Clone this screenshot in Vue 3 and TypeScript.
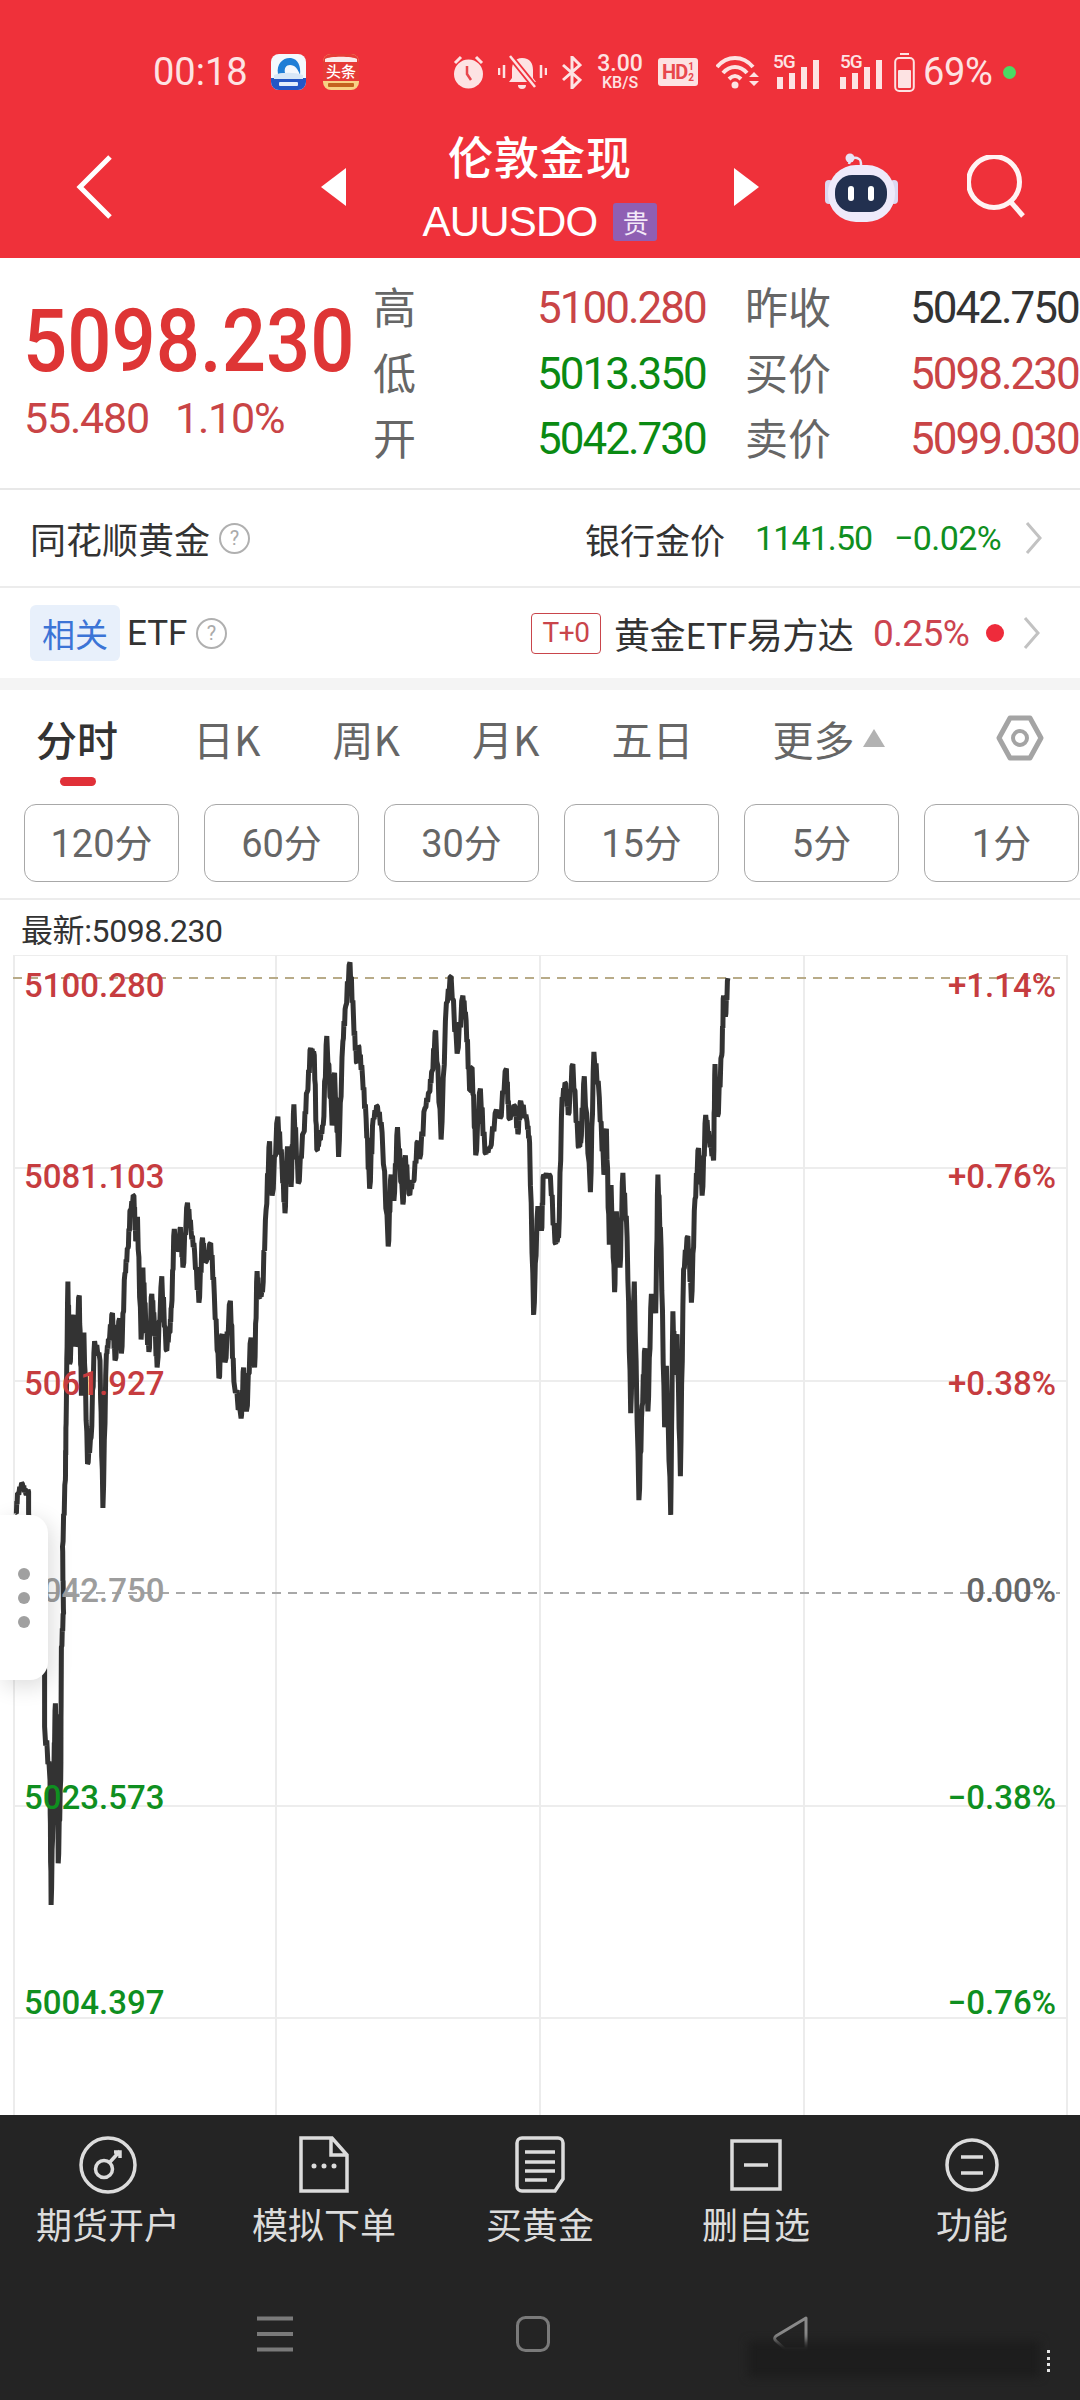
<template>
  <div class="page">
    <header class="top">
      <div class="status">
        <span class="time">00:18</span>
        <svg class="app-blue" width="35" height="36" viewBox="0 0 35 36">
          <rect width="35" height="36" rx="8" fill="#f4f8fd" />
          <path d="M0 24h35v4a8 8 0 0 1-8 8H8a8 8 0 0 1-8-8z" fill="#2456c4" />
          <path d="M7 20C5 9 13 3 20 4c7 1 10 8 9 17-2-6-5-10-10-10-4 0-6 3-5 8z" fill="#1f7ed6" />
          <path d="M3 21c8-3 20-3 29 0v4H3z" fill="#d8e7f7" />
          <rect x="8" y="28" width="19" height="4" rx="1" fill="#e4edfb" />
        </svg>
        <svg class="app-red" width="36" height="36" viewBox="0 0 36 36">
          <rect width="36" height="36" rx="8" fill="#f8d184" />
          <path d="M0 8a8 8 0 0 1 8-8h20a8 8 0 0 1 8 8v19H0z" fill="#e63b36" />
          <path d="M2 5c4-3 28-3 32 0v3H2z" fill="#fbeaea" />
          <text x="18" y="23" text-anchor="middle" font-size="15" font-weight="500" fill="#fff" class="cjk">头条</text>
          <rect x="5" y="29" width="26" height="4" rx="1" fill="#c4621f" />
        </svg>
        <svg class="alarm" width="31" height="34" viewBox="0 0 31 34">
          <circle cx="15.5" cy="19" r="14.5" fill="#fde3e3" />
          <path d="M2 8l6-6M29 8l-6-6" stroke="#fde3e3" stroke-width="3" />
          <path d="M14 11v8l4 6" stroke="#e8474d" stroke-width="2.5" fill="none" />
        </svg>
        <svg class="bell" width="49" height="34" viewBox="0 0 49 34">
          <path d="M24 3c-7 0-10 5-10 12v8l-3 4h27l-3-4v-8c0-7-3-12-11-12z" fill="#fde3e3" />
          <path d="M20 30a4 4 0 0 0 8 0z" fill="#fde3e3" />
          <path d="M12 1l25 31" stroke="#f0323c" stroke-width="6" />
          <path d="M12 1l25 31" stroke="#fde3e3" stroke-width="2.5" />
          <path d="M1 13v7M6 10v13M43 10v13M48 13v7" stroke="#fde3e3" stroke-width="2.5" />
        </svg>
        <svg class="bt" width="20" height="33" viewBox="0 0 20 33">
          <path d="M1 9l17 15-8 8V1l8 8L1 24" stroke="#fde3e3" stroke-width="3" fill="none" />
        </svg>
        <div class="speed"><span>3.00</span><small>KB/S</small></div>
        <div class="hd"><b>HD</b><i>1<br />2</i></div>
        <svg class="wifi" width="44" height="34" viewBox="0 0 44 34">
          <path d="M1 12c10-12 26-12 36 0M7 18c7-8 17-8 24 0M13 24c4-4 8-4 12 0" stroke="#fde3e3" stroke-width="4" fill="none" />
          <circle cx="19" cy="30" r="3.5" fill="#fde3e3" />
          <path d="M33 22h10l-5-5zM33 26h10l-5 5z" fill="#fde3e3" />
        </svg>
        <div v-for="n in 2" :key="n" class="sig" :class="'sig' + n">
          <span class="g5">5G</span>
          <i v-for="h in signalBars" :key="h" :style="{ height: h + 'px' }"></i>
        </div>
        <svg class="batt" width="21" height="39" viewBox="0 0 21 39">
          <path d="M6 1h9" stroke="#fde3e3" stroke-width="2" />
          <rect x="1.2" y="5" width="18.6" height="33" rx="4" stroke="#fde3e3" stroke-width="2" fill="none" />
          <rect x="4" y="17" width="13" height="18" rx="1" fill="#fde3e3" />
        </svg>
        <span class="pct">69%</span>
        <span class="dot"></span>
      </div>

      <nav class="nav">
        <svg class="back" width="37" height="64" viewBox="0 0 37 64">
          <path d="M34 2L4 32l30 30" stroke="#fff" stroke-width="5" fill="none" />
        </svg>
        <span class="tri-l"></span>
        <div class="title">
          <h1>伦敦金现</h1>
          <div class="sub">AUUSDO<span class="gui">贵</span></div>
        </div>
        <span class="tri-r"></span>
        <svg class="robot" width="73" height="71" viewBox="0 0 73 71">
          <path d="M24 13c1-5 5-8 10-5 2 1 2 4 2 6" stroke="#e8e4f5" stroke-width="2.5" fill="none" />
          <circle cx="25" cy="7" r="4.5" fill="#e8e4f5" />
          <rect x="0" y="29" width="8" height="24" rx="4" fill="#dcd8f0" />
          <rect x="65" y="29" width="8" height="24" rx="4" fill="#dcd8f0" />
          <rect x="3" y="14" width="67" height="57" rx="28" fill="#eeeafa" />
          <rect x="10" y="24" width="52" height="37" rx="17" fill="#22304f" />
          <rect x="23" y="35" width="6" height="15" rx="3" fill="#fff" />
          <rect x="43" y="35" width="6" height="15" rx="3" fill="#fff" />
        </svg>
        <svg class="search" width="60" height="64" viewBox="0 0 60 64">
          <circle cx="27" cy="27" r="25.5" stroke="#fff3f3" stroke-width="5" fill="none" />
          <path d="M43 46l13 15" stroke="#fff3f3" stroke-width="5" />
        </svg>
      </nav>
    </header>

    <section class="quote">
      <div class="q-left">
        <div class="q-price">5098.230</div>
        <div class="q-change"><span>55.480</span><span>1.10%</span></div>
      </div>
      <div class="q-grid">
        <template v-for="cell in quoteCells" :key="cell.text">
          <span :class="cell.cls">{{ cell.text }}</span>
        </template>
      </div>
    </section>

    <div class="row row-a">
      <span class="row-name">同花顺黄金</span>
      <span class="help">?</span>
      <span class="row-right">银行金价</span>
      <span class="bank-val green">1141.50</span>
      <span class="bank-pct green">−0.02%</span>
      <svg class="chev" width="17" height="32" viewBox="0 0 17 32"><path d="M2 1l13 15L2 31" stroke="#c2c2c2" stroke-width="3" fill="none" /></svg>
    </div>
    <div class="row row-b">
      <span class="rel">相关</span>
      <span class="etf">ETF</span>
      <span class="help help-etf">?</span>
      <span class="t0">T+0</span>
      <span class="fund">黄金ETF易方达</span>
      <span class="fund-pct">0.25%</span>
      <span class="red-dot"></span>
      <svg class="chev chev-b" width="17" height="32" viewBox="0 0 17 32"><path d="M2 1l13 15L2 31" stroke="#c2c2c2" stroke-width="3" fill="none" /></svg>
    </div>
    <div class="band"></div>

    <div class="tabs">
      <span v-for="tab in tabs" :key="tab" class="tab" :class="{ on: tab === '分时', more: tab === '更多' }">{{ tab }}</span>
      <span class="more-tri"></span>
      <svg class="hex" width="48" height="46" viewBox="0 0 48 46">
        <path d="M14 3h20l11 20-11 20H14L3 23z" stroke="#a4a4a4" stroke-width="5" fill="none" stroke-linejoin="round" />
        <circle cx="24" cy="23" r="7" stroke="#a4a4a4" stroke-width="4" fill="none" />
      </svg>
    </div>

    <div class="periods">
      <span v-for="p in periods" :key="p" class="period">{{ p }}</span>
    </div>

    <div class="latest">最新:5098.230</div>

    <div class="chart">
      <svg class="plot" width="1080" height="1160" viewBox="0 955 1080 1160">
        <line v-for="y in gridY" :key="y" x1="13" x2="1067" :y1="y" :y2="y" stroke="#e7e7e7" stroke-width="1.5" />
        <line v-for="x in gridX" :key="x" :x1="x" :x2="x" y1="955" y2="2115" stroke="#ececec" stroke-width="2" />
        <line x1="13" x2="1060" y1="978" y2="978" stroke="#b8ab88" stroke-width="2" stroke-dasharray="9 7" />
        <line x1="48" x2="1060" y1="1593" y2="1593" stroke="#a8a8a8" stroke-width="2" stroke-dasharray="9 7" />
        <polyline :points="linePoints" fill="none" stroke="#333" stroke-width="5" stroke-linejoin="bevel" />
      </svg>
      <span v-for="l in axisLeft" :key="l.text" class="axis axis-l" :style="{ top: l.y - 955 - 21 + 'px', color: l.color }">{{ l.text }}</span>
      <span v-for="r in axisRight" :key="r.text" class="axis axis-r" :style="{ top: r.y - 955 - 21 + 'px', color: r.color }">{{ r.text }}</span>
      <div class="handle"><i></i><i></i><i></i></div>
    </div>

    <footer class="bottom">
      <div class="actions">
        <div class="action">
          <svg width="60" height="60" viewBox="0 0 60 60" class="ic">
            <circle cx="30" cy="30" r="27" />
            <circle cx="26" cy="34" r="8.5" />
            <path d="M32 27l10-11M36 17l6 0 0 6" />
          </svg>
          <span>期货开户</span>
        </div>
        <div class="action">
          <svg width="60" height="60" viewBox="0 0 60 60" class="ic">
            <path d="M7 3h31l15 17v36H7zM37 3v17h16" />
            <circle cx="20" cy="31" r="2.5" class="fill" />
            <circle cx="30" cy="31" r="2.5" class="fill" />
            <circle cx="40" cy="31" r="2.5" class="fill" />
          </svg>
          <span>模拟下单</span>
        </div>
        <div class="action">
          <svg width="60" height="60" viewBox="0 0 60 60" class="ic">
            <path d="M12 3h36a5 5 0 0 1 5 5v36l-8 12H12a5 5 0 0 1-5-5V8a5 5 0 0 1 5-5z" />
            <path d="M15 17h30M15 27h30M15 36h30M15 45h22" />
          </svg>
          <span>买黄金</span>
        </div>
        <div class="action">
          <svg width="60" height="60" viewBox="0 0 60 60" class="ic">
            <rect x="6" y="6" width="48" height="48" />
            <path d="M18 30h24" />
          </svg>
          <span>删自选</span>
        </div>
        <div class="action">
          <svg width="60" height="60" viewBox="0 0 60 60" class="ic">
            <circle cx="30" cy="30" r="25" />
            <path d="M19 22h22M19 38h22" />
          </svg>
          <span>功能</span>
        </div>
      </div>
      <div class="sysnav">
        <svg width="36" height="36" viewBox="0 0 36 36"><path d="M0 2.5h36M0 18h36M0 33.5h36" stroke="#7a7a7a" stroke-width="4" /></svg>
        <svg width="34" height="36" viewBox="0 0 34 36"><rect x="1.5" y="1.5" width="31" height="33" rx="8" stroke="#7a7a7a" stroke-width="3" fill="none" /></svg>
        <svg width="35" height="36" viewBox="0 0 35 36"><path d="M33 2L3 20c-2 2-2 3 0 5l9 8h21z" stroke="#8a8a8a" stroke-width="3" fill="none" stroke-linejoin="round" /></svg>
      </div>
      <div class="smudge"></div>
      <div class="specks"></div>
    </footer>
  </div>
</template>

<script setup lang="ts">
interface AxisLabel { text: string; y: number; color: string }

const red = '#c63c3f'
const green = '#0f8f20'
const grey = '#9d9d9d'

const signalBars = [12, 16, 22, 29]
const tabs = ['分时', '日K', '周K', '月K', '五日', '更多']
const periods = ['120分', '60分', '30分', '15分', '5分', '1分']
const gridX = [14, 276, 540, 804, 1067]
const gridY = [955, 1168, 1381, 1806, 2018]

const quoteCells = [
  { text: '高', cls: 'lab' }, { text: '5100.280', cls: 'val r' }, { text: '昨收', cls: 'lab' }, { text: '5042.750', cls: 'val k' },
  { text: '低', cls: 'lab' }, { text: '5013.350', cls: 'val g' }, { text: '买价', cls: 'lab' }, { text: '5098.230', cls: 'val r' },
  { text: '开', cls: 'lab' }, { text: '5042.730', cls: 'val g' }, { text: '卖价', cls: 'lab' }, { text: '5099.030', cls: 'val r' }
]

const axisLeft: AxisLabel[] = [
  { text: '5100.280', y: 985, color: red },
  { text: '5081.103', y: 1176, color: red },
  { text: '5061.927', y: 1383, color: red },
  { text: '5042.750', y: 1590, color: grey },
  { text: '5023.573', y: 1797, color: green },
  { text: '5004.397', y: 2002, color: green }
]
const axisRight: AxisLabel[] = [
  { text: '+1.14%', y: 985, color: red },
  { text: '+0.76%', y: 1176, color: red },
  { text: '+0.38%', y: 1383, color: red },
  { text: '0.00%', y: 1590, color: '#666' },
  { text: '−0.38%', y: 1797, color: green },
  { text: '−0.76%', y: 2002, color: green }
]

// traced from crops of the chart: [x, y] in crop pixels, see the map calls below
const opening: number[][] = [
  [45, 100], [50, 40], [63, 12], [72, 40], [80, 35], [80, 100], [100, 300], [125, 570], [125, 740], [140, 900], [143, 1275],
  [150, 900], [155, 670], [160, 800], [163, 1150], [170, 900], [172, 500], [178, 400], [175, 200], [183, 0]
]
const leftPart: number[][] = [
  [185, 1350], [190, 945], [195, 1180], [205, 1040], [212, 1130], [222, 985], [228, 1270], [235, 1090], [245, 1465], [255, 1390],
  [265, 1115], [280, 1170], [288, 1590], [298, 1150], [305, 1110], [315, 1035], [322, 1170], [335, 1050], [340, 1150], [350, 920],
  [358, 850], [365, 740], [375, 700], [380, 830], [385, 760], [395, 1110], [400, 905], [408, 1060], [417, 1145], [425, 980],
  [432, 1060], [440, 1190], [453, 930], [465, 1140], [475, 1090], [480, 1020], [488, 795], [500, 860], [505, 790], [512, 905],
  [525, 720], [535, 800], [545, 860], [557, 1005], [567, 820], [575, 890], [590, 835], [600, 980], [613, 1220], [622, 1095],
  [630, 1175], [645, 1000], [655, 1230], [675, 1335], [682, 1190], [690, 1315], [703, 1105], [713, 1190], [720, 915], [725, 990],
  [735, 975], [745, 740], [755, 545], [762, 700], [778, 475], [790, 620], [798, 750], [805, 560], [815, 675], [823, 440],
  [835, 665], [850, 520], [860, 405], [870, 280], [880, 300], [887, 570], [895, 540], [905, 500], [915, 245], [930, 500],
  [937, 350], [948, 590], [960, 260], [968, 160], [980, 35], [990, 200], [998, 320], [1005, 275], [1015, 360], [1025, 480],
  [1035, 680], [1045, 480], [1057, 445], [1070, 520], [1087, 845], [1095, 640], [1103, 715], [1113, 505], [1128, 725], [1135, 585],
  [1145, 695], [1157, 660], [1170, 545], [1175, 595], [1190, 450], [1202, 405], [1210, 345], [1220, 230], [1235, 540], [1250, 150],
  [1263, 75], [1280, 295], [1296, 130], [1305, 200], [1315, 400], [1322, 335], [1332, 585], [1345, 395], [1358, 578], [1372, 565],
  [1390, 455], [1400, 480], [1418, 338], [1425, 480], [1442, 445], [1450, 525]
]
const rightPart: number[][] = [
  [2, 430], [20, 490], [27, 550], [38, 1040], [50, 730], [60, 800], [66, 640], [85, 645], [98, 835], [108, 820],
  [118, 420], [128, 380], [135, 470], [148, 325], [163, 560], [170, 550], [180, 360], [197, 690], [207, 290], [222, 420],
  [235, 640], [242, 510], [250, 840], [255, 670], [265, 975], [270, 745], [280, 905], [288, 635], [300, 820], [310, 1320],
  [320, 945], [333, 1568], [342, 1300], [350, 1135], [358, 1315], [368, 980], [380, 1035], [386, 640], [395, 850], [405, 1360],
  [410, 1185], [422, 1610], [428, 1030], [435, 1210], [440, 1095], [449, 1500], [458, 910], [470, 815], [480, 1005], [490, 710],
  [500, 565], [510, 700], [520, 470], [530, 540], [542, 600], [546, 325], [553, 475], [565, 300], [570, 130], [575, 190], [582, 80]
]

const traced: number[][] = [
  ...opening.map(([x, y]) => [x / 2.8, 1480 + y / 3]),
  ...leftPart.map(([x, y]) => [x / 2.8, 950 + y / 2.85]),
  ...rightPart.map(([x, y]) => [520 + x / 2.8, 950 + y / 2.85])
]

// adds a zigzag between traced points so it reads as dense tick data
function roughen(pts: number[][]): string {
  const out: string[] = []
  pts.forEach(([x, y], i) => {
    out.push(`${x.toFixed(1)},${y.toFixed(1)}`)
    const next = pts[i + 1]
    if (!next) return
    const dy = Math.abs(next[1] - y)
    const amp = Math.min(9, 2 + dy * 0.12)
    for (let k = 1; k < 5; k++) {
      const t = k / 5
      const sign = k % 2 ? 1 : -1
      const wiggle = sign * amp * (0.6 + 0.4 * Math.abs(Math.sin(i * 12.9898 + k)))
      const px = x + (next[0] - x) * t
      const py = y + (next[1] - y) * t + wiggle
      out.push(`${px.toFixed(1)},${py.toFixed(1)}`)
    }
  })
  return out.join(' ')
}

const linePoints = roughen(traced)
</script>

<style>
html, body { margin: 0; background: #fff; }
</style>

<style scoped>
.page {
  width: 1080px;
  height: 2400px;
  overflow: hidden;
  position: relative;
  background: #fff;
  font-family: Roboto, "Noto Sans CJK SC", sans-serif;
  color: #333;
}
.cjk { font-family: "Noto Sans CJK SC", sans-serif; }

/* header */
.top { height: 258px; background: #ef313a; box-sizing: border-box; padding-top: 50px; }
.status { display: flex; align-items: center; height: 44px; padding-left: 153px; color: #fde3e3; }
.time { width: 94px; font-size: 38px; white-space: nowrap; }
.app-blue { margin-left: 24px; }
.app-red { margin-left: 17px; }
.alarm { margin-left: 94px; }
.bell { margin-left: 14px; }
.bt { margin-left: 15px; }
.speed { margin-left: 13px; width: 50px; display: flex; flex-direction: column; align-items: center; gap: 3px; font-weight: 500; }
.speed span { font-size: 23px; line-height: 18px; }
.speed small { font-size: 16px; line-height: 13px; }
.hd { margin-left: 13px; width: 40px; height: 28px; background: #fde3e3; border-radius: 3px; color: #e8474d; display: flex; align-items: center; justify-content: center; }
.hd b { font-size: 20px; letter-spacing: -1px; }
.hd i { font-size: 10px; line-height: 11px; font-style: normal; font-weight: 700; margin-left: 1px; text-align: center; }
.wifi { margin-left: 18px; }
.sig { position: relative; width: 47px; height: 34px; display: flex; align-items: flex-end; gap: 6px; padding-left: 4px; box-sizing: border-box; }
.sig1 { margin-left: 13px; }
.sig2 { margin-left: 20px; width: 43px; padding-left: 0; }
.sig i { display: block; width: 6px; background: #fde3e3; }
.g5 { position: absolute; left: 0; top: -3px; font-size: 19px; line-height: 20px; font-weight: 500; letter-spacing: -1px; }
.batt { margin-left: 11px; }
.pct { margin-left: 8px; width: 69px; font-size: 38px; letter-spacing: -0.3px; white-space: nowrap; }
.dot { margin-left: 11px; width: 13px; height: 13px; border-radius: 50%; background: #4cd964; }

.nav { display: flex; align-items: center; height: 143px; margin-top: 21px; padding-left: 76px; color: #fff; }
.tri-l, .tri-r { width: 0; height: 0; border-top: 19px solid transparent; border-bottom: 19px solid transparent; }
.tri-l { margin-left: 208px; border-right: 25px solid #fff; }
.tri-r { border-left: 25px solid #fff; }
.title { width: 388px; text-align: center; }
.title h1 { margin: 0; font: 500 45px/60px "Noto Sans CJK SC", sans-serif; letter-spacing: 1px; }
.sub { margin-top: 10px; font: 400 42px/52px "Liberation Sans", sans-serif; letter-spacing: -0.8px; display: flex; justify-content: center; align-items: center; }
.gui { margin-left: 16px; width: 44px; height: 38px; background: #8f5fb3; color: #f3e9f8; border-radius: 3px; font: 400 26px/38px "Noto Sans CJK SC", sans-serif; }
.robot { margin-left: 66px; }
.search { margin-left: 69px; }

/* quote */
.quote { display: flex; height: 232px; box-sizing: border-box; border-bottom: 2px solid #e8e8e8; }
.q-left { width: 373px; box-sizing: border-box; padding: 39px 0 0 23px; flex-shrink: 0; }
.q-price { font-size: 88px; line-height: 88px; font-weight: 500; color: #de3535; white-space: nowrap; transform: scaleX(0.885); transform-origin: left center; }
.q-change { margin-top: 8px; display: flex; gap: 26px; font-size: 43px; line-height: 50px; color: #c94446; letter-spacing: -1.2px; margin-left: 1px; }
.q-grid { display: grid; grid-template-columns: 164px 208px 165px 170px; grid-auto-rows: 65.5px; padding-top: 18px; align-items: center; }
.lab { font: 400 43px/59px "Noto Sans CJK SC", sans-serif; padding-bottom: 6px; color: #666; white-space: nowrap; }
.val { font-size: 44px; line-height: 65px; letter-spacing: -2px; white-space: nowrap; }
.val.r { color: #c94446; }
.val.g { color: #0a8a12; }
.val.k { color: #333; }

/* info rows */
.row { display: flex; align-items: center; box-sizing: border-box; font-size: 36px; position: relative; }
.row-a { height: 98px; padding-left: 30px; border-bottom: 2px solid #ececec; }
.row-b { height: 90px; padding-left: 30px; }
.row-name { font-family: "Noto Sans CJK SC", sans-serif; font-size: 36px; width: 178px; white-space: nowrap; color: #333; }
.help { width: 31px; height: 31px; box-sizing: border-box; border: 2px solid #b0b0b0; border-radius: 50%; color: #aaa; font-size: 20px; line-height: 27px; text-align: center; margin-left: 11px; }
.row-right { margin-left: 335px; font-family: "Noto Sans CJK SC", sans-serif; font-size: 35px; width: 142px; white-space: nowrap; }
.bank-val { margin-left: 28px; width: 118px; font-size: 34px; letter-spacing: -0.9px; }
.bank-pct { margin-left: 21px; width: 112px; font-size: 34px; letter-spacing: -0.6px; white-space: nowrap; }
.green { color: #0f8f20; }
.chev { margin-left: 19px; }
.rel { width: 90px; height: 56px; background: #e8f0fb; border-radius: 6px; color: #3c74d6; font: 400 33px/56px "Noto Sans CJK SC", sans-serif; text-align: center; }
.etf { margin-left: 7px; width: 59px; font-size: 35px; }
.help-etf { margin-left: 10px; }
.t0 { margin-left: 304px; width: 70px; height: 41px; box-sizing: border-box; border: 1.5px solid #c9454b; border-radius: 4px; color: #c9454b; font-size: 28px; line-height: 38px; text-align: center; letter-spacing: -0.5px; }
.fund { margin-left: 13px; width: 241px; font-family: "Noto Sans CJK SC", sans-serif; font-size: 36px; white-space: nowrap; letter-spacing: -0.4px; }
.fund-pct { margin-left: 18px; width: 102px; color: #cc4450; font-size: 37px; letter-spacing: -0.6px; }
.red-dot { margin-left: 11px; width: 18px; height: 18px; border-radius: 50%; background: #ee2b3b; }
.band { height: 12px; background: #f4f4f4; }

/* tabs */
.tabs { display: flex; align-items: flex-start; height: 114px; box-sizing: border-box; padding: 22px 0 0 36px; gap: 72px; position: relative; }
.tab { font: 400 41px/52px "Noto Sans CJK SC", sans-serif; color: #666; white-space: nowrap; position: relative; }
.tab.on { color: #333; font-weight: 500; margin-right: 3px; }
.tab.on::after { content: ""; position: absolute; left: 24px; top: 65px; width: 36px; height: 9px; border-radius: 5px; background: #e03038; }
.tab.more { margin-left: 7px; }
.more-tri { position: absolute; left: 863px; top: 39px; width: 0; height: 0; border-left: 11px solid transparent; border-right: 11px solid transparent; border-bottom: 18px solid #b2b2b2; }
.hex { position: absolute; left: 996px; top: 25px; }

.periods { display: flex; gap: 25px; padding-left: 24px; height: 96px; box-sizing: border-box; border-bottom: 2px solid #ececec; }
.period { flex: 0 0 155px; height: 78px; box-sizing: border-box; border: 1px solid #a8a8a8; border-radius: 12px; font: 400 38px/79px Roboto, "Noto Sans CJK SC", sans-serif; text-align: center; color: #666; }

.latest { height: 55px; box-sizing: border-box; padding-left: 21px; font-size: 32px; line-height: 62px; color: #333; letter-spacing: -0.4px; white-space: nowrap; }

/* chart */
.chart { position: relative; height: 1160px; overflow: hidden; }
.plot { position: absolute; left: 0; top: 0; display: block; }
.axis { position: absolute; font-size: 33px; font-weight: 500; line-height: 44px; white-space: nowrap; }
.axis-l { left: 24px; }
.axis-r { right: 24px; }
.handle { position: absolute; left: 0; top: 560px; width: 48px; height: 165px; background: #fff; border-radius: 0 18px 18px 0; box-shadow: 4px 6px 22px rgba(0, 0, 0, 0.14); display: flex; flex-direction: column; align-items: center; justify-content: center; gap: 12px; }
.handle i { width: 12px; height: 12px; border-radius: 50%; background: #a0a0a0; }

/* bottom bar */
.bottom { position: relative; height: 285px; background: #242424; box-sizing: border-box; padding-top: 20px; overflow: hidden; }
.actions { display: grid; grid-template-columns: repeat(5, 1fr); }
.action { display: flex; flex-direction: column; align-items: center; }
.action span { margin-top: 3px; font: 400 36px/50px "Noto Sans CJK SC", sans-serif; color: #dcdcdc; white-space: nowrap; }
.ic { fill: none; stroke: #dcdcdc; stroke-width: 3.5; }
.ic .fill { fill: #dcdcdc; stroke: none; }
.sysnav { display: flex; gap: 223px; padding-left: 257px; margin-top: 68px; }
.smudge { position: absolute; left: 748px; top: 226px; width: 292px; height: 36px; background: #1d1d1d; filter: blur(4px); }
.specks { position: absolute; left: 1047px; top: 235px; height: 22px; border-left: 3px dotted #e6e6e6; }
</style>
